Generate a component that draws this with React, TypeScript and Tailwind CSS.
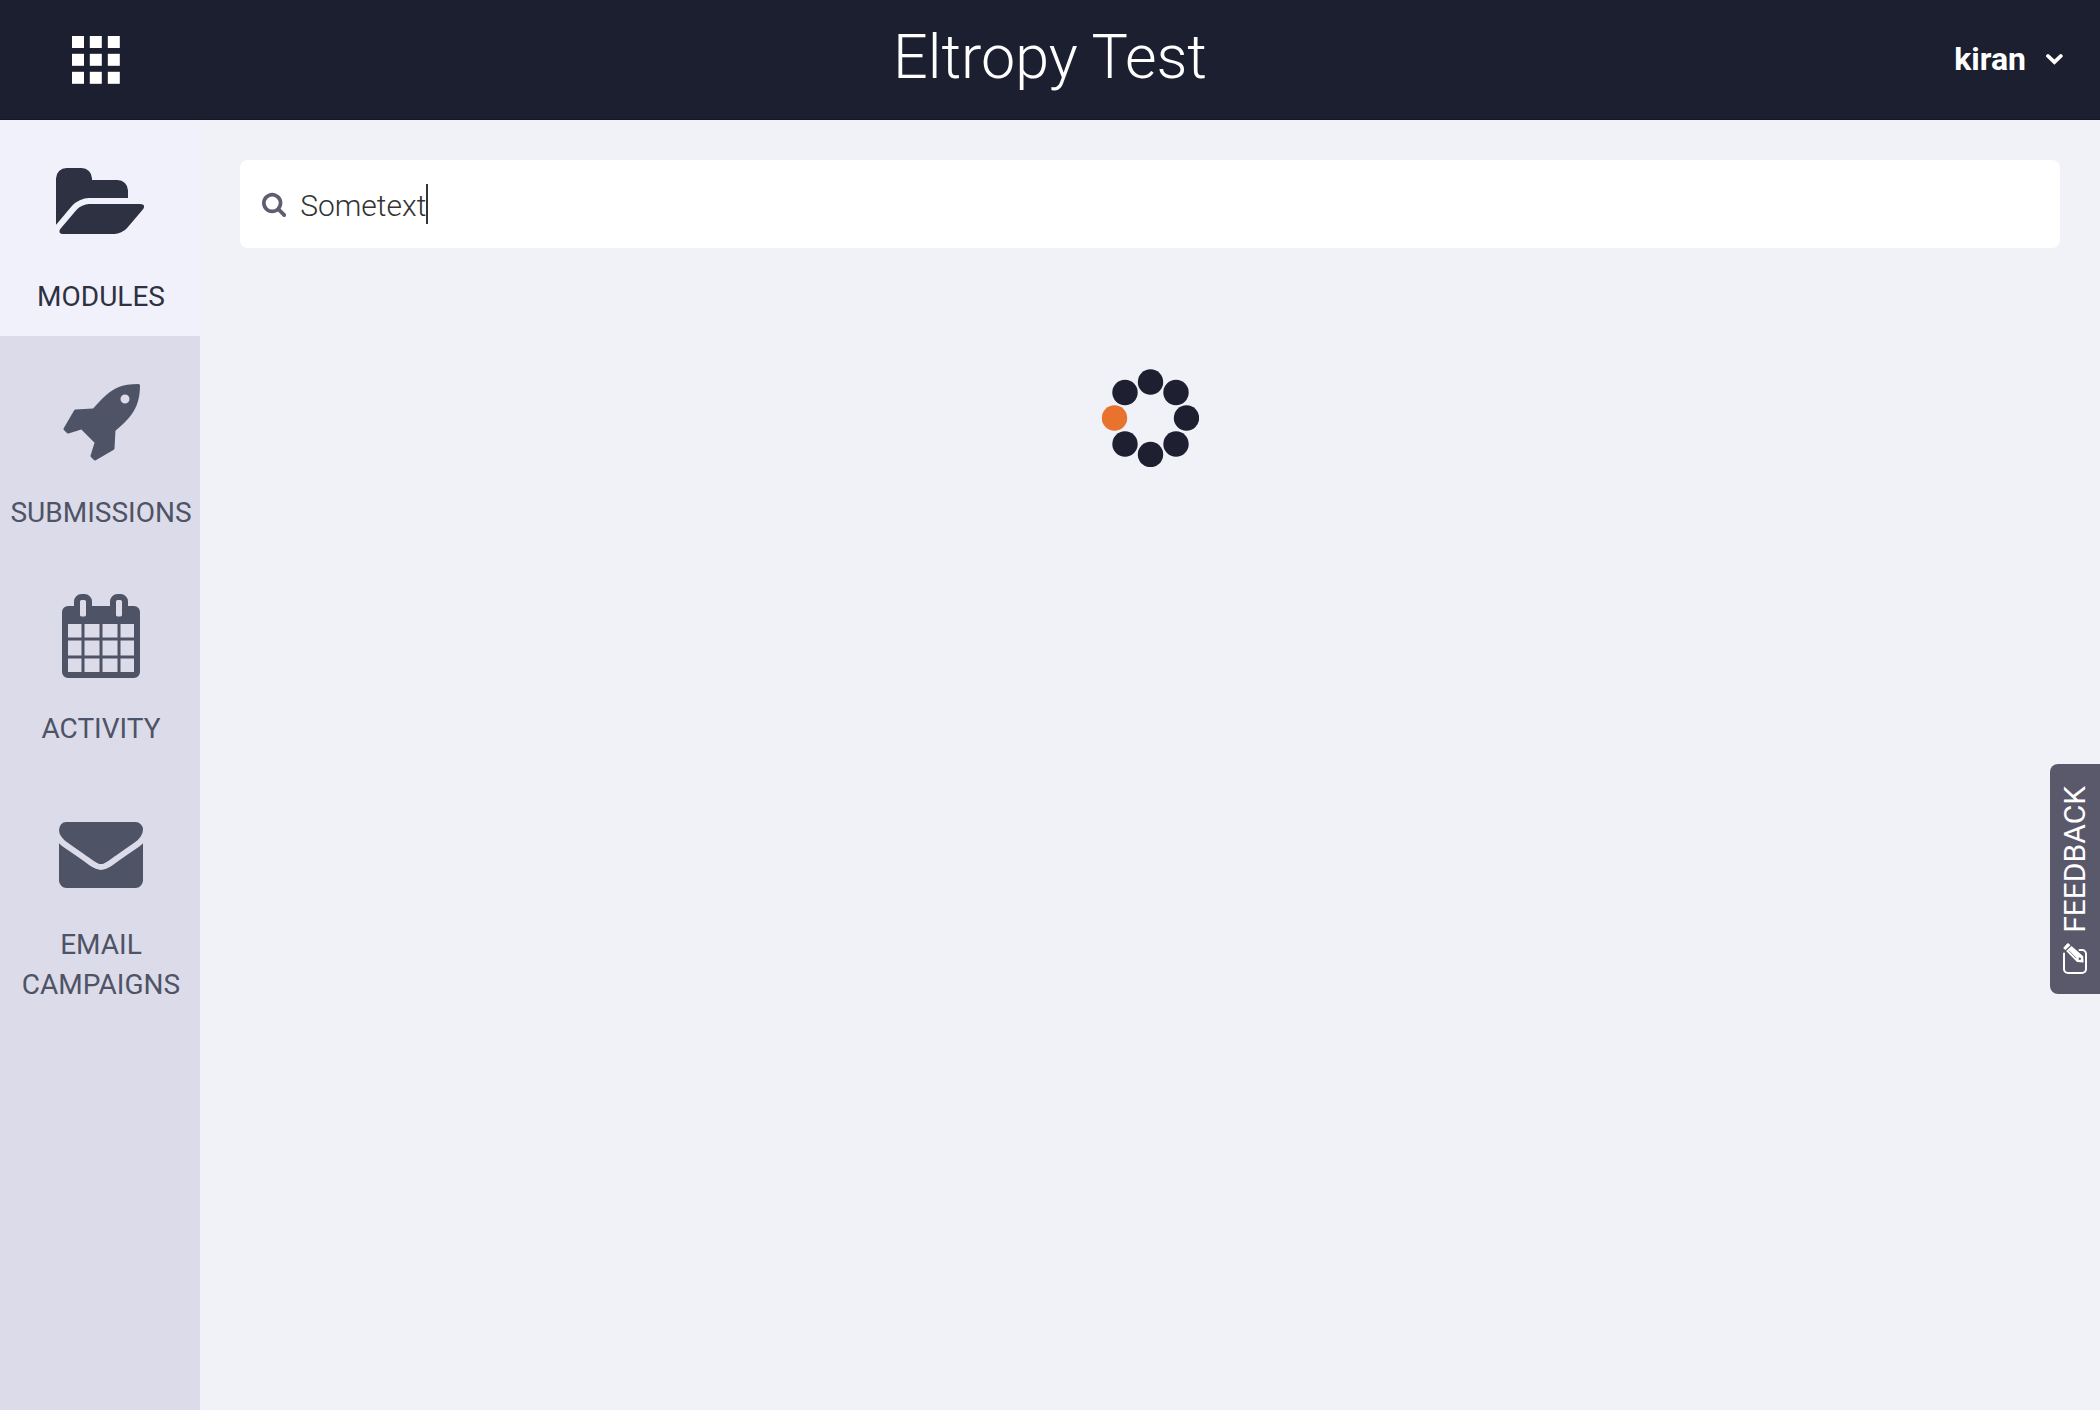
import React, { useState } from "react";

type IconProps = { viewBox: string; d: string; className: string };

function Icon({ viewBox, d, className }: IconProps) {
  return (
    <svg viewBox={viewBox} className={className} fill="currentColor" aria-hidden="true">
      <path d={d} />
    </svg>
  );
}

const FOLDER =
  "M1879 952q0 31-31 66l-336 396q-43 51-120.5 86.5t-143.5 35.5h-1088q-34 0-60.5-13t-26.5-43q0-31 31-66l336-396q43-51 120.5-86.5t143.5-35.5h1088q34 0 60.5 13t26.5 43zm-343-344v160h-832q-94 0-197 47.5t-164 119.5l-337 396-5 6q0-4-.5-12.5t-.5-12.5v-960q0-92 66-158t158-66h320q92 0 158 66t66 158v32h544q92 0 158 66t66 158z";
const ROCKET =
  "M1440 448q0-40-28-68t-68-28-68 28-28 68 28 68 68 28 68-28 28-68zm224-288q0 249-75.5 430.5t-253.5 360.5q-81 80-195 176l-20 379q-2 16-16 26l-384 224q-7 4-16 4-12 0-23-9l-64-64q-13-14-8-32l85-276-281-281-276 85q-3 1-9 1-14 0-23-9l-64-64q-17-19-5-39l224-384q10-14 26-16l379-20q96-114 176-195 188-187 358-258t431-71q14 0 24 9.5t10 22.5z";
const CALENDAR =
  "M192 1664h288v-288h-288v288zm352 0h320v-288h-320v288zm-352-352h288v-320h-288v320zm352 0h320v-320h-320v320zm-352-384h288v-288h-288v288zm736 736h320v-288h-320v288zm-384-736h320v-288h-320v288zm768 736h288v-288h-288v288zm-384-352h320v-320h-320v320zm-352-864v-288q0-13-9.5-22.5t-22.5-9.5h-64q-13 0-22.5 9.5t-9.5 22.5v288q0 13 9.5 22.5t22.5 9.5h64q13 0 22.5-9.5t9.5-22.5zm736 864h288v-320h-288v320zm-384-384h320v-288h-320v288zm384 0h288v-288h-288v288zm32-480v-288q0-13-9.5-22.5t-22.5-9.5h-64q-13 0-22.5 9.5t-9.5 22.5v288q0 13 9.5 22.5t22.5 9.5h64q13 0 22.5-9.5t9.5-22.5zm384-64v1280q0 52-38 90t-90 38h-1408q-52 0-90-38t-38-90v-1280q0-52 38-90t90-38h128v-96q0-66 47-113t113-47h64q66 0 113 47t47 113v96h384v-96q0-66 47-113t113-47h64q66 0 113 47t47 113v96h128q52 0 90 38t38 90z";
const ENVELOPE =
  "M1792 710v794q0 66-47 113t-113 47h-1472q-66 0-113-47t-47-113v-794q44 49 101 87 362 246 497 345 57 42 92.5 65.5t94.5 48 110 24.5h2q51 0 110-24.5t94.5-48 92.5-65.5q170-123 498-345 57-39 100-87zm0-294q0 79-49 151t-122 123q-376 261-468 325-10 7-42.5 31t-54 38.5-52 32.5-57.5 27-50 9h-2q-23 0-50-9t-57.5-27-52-32.5-54-38.5-42.5-31q-91-64-262-182.5t-205-142.5q-62-42-117-115.5t-55-136.5q0-78 41.5-130t118.5-52h1472q65 0 112.5 47t47.5 113z";
const SEARCH =
  "M1216 832q0-185-131.5-316.5t-316.5-131.5-316.5 131.5-131.5 316.5 131.5 316.5 316.5 131.5 316.5-131.5 131.5-316.5zm512 832q0 52-38 90t-90 38q-54 0-90-38l-343-342q-179 124-399 124-143 0-273.5-55.5t-225-150-150-225-55.5-273.5 55.5-273.5 150-225 225-150 273.5-55.5 273.5 55.5 225 150 150 225 55.5 273.5q0 220-124 399l343 343q37 37 37 90z";

const NAV = [
  { label: "MODULES", d: FOLDER, viewBox: "0 0 1920 1792", active: true },
  { label: "SUBMISSIONS", d: ROCKET, viewBox: "0 0 1664 1792", active: false },
  { label: "ACTIVITY", d: CALENDAR, viewBox: "64 0 1664 1792", active: false },
  { label: "EMAIL CAMPAIGNS", d: ENVELOPE, viewBox: "0 0 1792 1792", active: false },
];

const DOTS = [
  [49, 13],
  [74.5, 23.5],
  [85, 49],
  [74.5, 75],
  [49, 85.5],
  [23.5, 75],
  [13, 49],
  [23.5, 23.5],
];

function Header() {
  return (
    <header className="grid h-30 grid-cols-[1fr_auto_1fr] items-center border-b border-[#171826] bg-[#1c1f2f] text-white">
      <button type="button" aria-label="Apps" className="ml-18 justify-self-start">
        <svg viewBox="0 0 48 48" className="size-12" fill="currentColor" aria-hidden="true">
          {[0, 17.8, 35.8].map((y) =>
            [0, 17.8, 35.8].map((x) => <rect key={`${x}-${y}`} x={x} y={y} width="12" height="12" />),
          )}
        </svg>
      </button>
      <h1 className="pb-1 text-[61px] leading-none font-light">Eltropy Test</h1>
      <button type="button" className="mr-9 flex items-center gap-5 justify-self-end pb-0.5 text-[32px] font-bold">
        kiran
        <svg
          viewBox="0 0 18 12"
          className="h-3 w-4.5"
          fill="none"
          stroke="currentColor"
          strokeWidth="3.8"
          strokeLinecap="round"
          aria-hidden="true"
        >
          <path d="M2 3 8.4 9.2 14.8 3" />
        </svg>
      </button>
    </header>
  );
}

function Sidebar() {
  return (
    <nav className="w-50 shrink-0 bg-[#dcdbe9]">
      {NAV.map((item) => (
        <a
          key={item.label}
          href="#"
          aria-current={item.active ? "page" : undefined}
          className={
            item.active
              ? "flex flex-col items-center gap-[31px] bg-[#f1f1fb] pt-[42px] pb-[19px] pl-0.5 text-[#2e3142]"
              : "flex flex-col items-center gap-[31px] pt-[42px] pb-[19px] pl-0.5 text-[#4e5366]"
          }
        >
          <Icon viewBox={item.viewBox} d={item.d} className="h-21 w-auto" />
          <span className="text-center text-[28px] leading-10">{item.label}</span>
        </a>
      ))}
    </nav>
  );
}

function SearchBox() {
  const [query, setQuery] = useState("Sometext");
  return (
    <label className="flex h-22 items-center rounded-lg bg-white pl-[22px]">
      <Icon viewBox="64 0 1664 1792" d={SEARCH} className="h-[26px] w-auto text-[#5f5d70]" />
      <input
        type="text"
        aria-label="Search"
        value={query}
        onChange={(e) => setQuery(e.target.value)}
        className="ml-3.5 bg-transparent pt-0.5 text-[30px] font-light text-[#333333] caret-transparent outline-none [field-sizing:content]"
      />
      <span className="h-10 w-0.5 bg-[#333333]" />
    </label>
  );
}

function Spinner() {
  return (
    <svg viewBox="-0.5 0 98 98" className="mx-auto mt-[121px] size-[98px]" role="img" aria-label="Loading">
      {DOTS.map(([cx, cy], i) => (
        <circle key={i} cx={cx} cy={cy} r="12.7" fill={i === 6 ? "#e8722e" : "#1e1f30"} />
      ))}
    </svg>
  );
}

function Feedback() {
  return (
    <button
      type="button"
      className="fixed top-[764px] right-0 flex w-[50px] flex-col items-center gap-2.5 rounded-l-lg bg-[#5a586b] pt-[22px] pb-5 text-white"
    >
      <span className="rotate-180 text-[30px] leading-10 font-normal [writing-mode:vertical-rl]">FEEDBACK</span>
      <svg viewBox="0 0 24 31" className="h-[31px] w-6" fill="none" stroke="currentColor" aria-hidden="true">
        <path
          d="M1 10.5V26a4 4 0 0 0 4 4h14a4 4 0 0 0 4-4V11a4 4 0 0 0-4-4h-2.5"
          strokeWidth="2"
          strokeLinecap="round"
        />
        <path d="M0.6 4.4 4.2 0.6q.8-.6 1.6 0l1.6 1.6-5 4.8-1.8-1.6q-.5-.5 0-1z" fill="currentColor" stroke="none" />
        <path d="M3.2 8 8.5 3 20.2 13.2 20.6 19.4 14 19z" fill="currentColor" stroke="none" />
        <path d="M5.9 7.7 13.3 15.2" stroke="#5a586b" strokeWidth="0.7" />
        <circle cx="16.8" cy="15.8" r="1.2" fill="#5a586b" stroke="none" />
      </svg>
    </button>
  );
}

export default function App() {
  return (
    <div className="flex min-h-screen flex-col bg-[#f1f2f8] font-[Roboto,sans-serif]">
      <Header />
      <div className="flex grow">
        <Sidebar />
        <main className="min-w-0 grow p-10">
          <SearchBox />
          <Spinner />
        </main>
      </div>
      <Feedback />
    </div>
  );
}
